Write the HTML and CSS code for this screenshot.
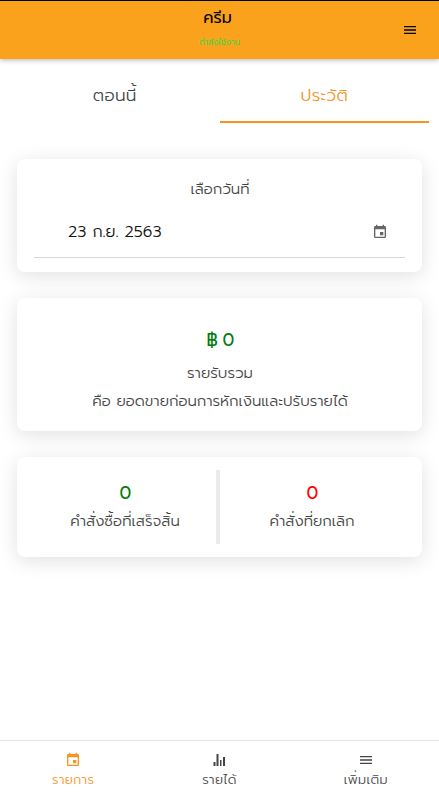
FILE: index.html
```html
<!DOCTYPE html>
<html lang="th">
<head>
    <meta charset="UTF-8">
    <meta name="viewport" content="width=device-width, initial-scale=1.0">
    <title>ครีม</title>
    <link rel="stylesheet" href="styles.css">
</head>
<body>
    <header class="header">
        <div class="header-title">
            <h1>ครีม</h1>
            <p class="status">กำลังใช้งาน</p>
        </div>
        <button class="menu-btn" aria-label="เมนู">
            <svg width="16" height="16" viewBox="0 0 24 24"><path d="M3 18h18v-2H3v2zm0-5h18v-2H3v2zm0-7v2h18V6H3z"/></svg>
        </button>
    </header>

    <div class="tabs">
        <div class="tab">ตอนนี้</div>
        <div class="tab active">ประวัติ</div>
    </div>

    <main class="content">
        <section class="card date-card">
            <div class="card-label">เลือกวันที่</div>
            <div class="date-input">
                <span class="date-value">23 ก.ย. 2563</span>
                <svg width="16" height="16" viewBox="0 0 24 24"><path d="M17 12h-5v5h5v-5zM16 1v2H8V1H6v2H5c-1.110 0-1.990.9-1.990 2L3 19c0 1.100.89 2 2 2h14c1.100 0 2-.9 2-2V5c0-1.100-.9-2-2-2h-1V1h-2zm3 18H5V8h14v11z"/></svg>
            </div>
        </section>

        <section class="card income-card">
            <div class="amount green">฿ 0</div>
            <div class="income-title">รายรับรวม</div>
            <div class="income-desc">คือ ยอดขายก่อนการหักเงินและปรับรายได้</div>
        </section>

        <section class="card order-card">
            <div class="order done">
                <div class="amount green">0</div>
                <div class="order-label">คำสั่งซื้อที่เสร็จสิ้น</div>
            </div>
            <div class="order cancelled">
                <div class="amount red">0</div>
                <div class="order-label">คำสั่งที่ยกเลิก</div>
            </div>
        </section>
    </main>

    <nav class="bottom-nav">
        <div class="nav-item active">
            <svg width="16" height="16" viewBox="0 0 24 24"><path d="M17 12h-5v5h5v-5zM16 1v2H8V1H6v2H5c-1.110 0-1.990.9-1.990 2L3 19c0 1.100.89 2 2 2h14c1.100 0 2-.9 2-2V5c0-1.100-.9-2-2-2h-1V1h-2zm3 18H5V8h14v11z"/></svg>
            <span>รายการ</span>
        </div>
        <div class="nav-item">
            <svg width="16" height="16" viewBox="0 0 16 16"><path d="M2.500 10h2v4h-2zM5.500 2h2v12h-2zM9 8h1.500v6H9zM12 5h2v9h-2z"/></svg>
            <span>รายได้</span>
        </div>
        <div class="nav-item">
            <svg width="16" height="16" viewBox="0 0 24 24"><path d="M3 18h18v-2H3v2zm0-5h18v-2H3v2zm0-7v2h18V6H3z"/></svg>
            <span>เพิ่มเติม</span>
        </div>
    </nav>
</body>
</html>
```
FILE: styles.css
```css
* {
    margin: 0;
    padding: 0;
    box-sizing: border-box;
}

body {
    font-family: 'Prompt', 'Kanit', 'Noto Sans Thai', 'Noto Sans', sans-serif;
    font-weight: 300;
    color: #444;
    background: #fff;
    min-height: 100vh;
    display: flex;
    flex-direction: column;
}

svg {
    fill: currentColor;
    display: block;
}

.header {
    height: 59px;
    background: #faa21b;
    border-top: 1px solid #000;
    box-shadow: 0 1px 5px rgba(0,0,0,0.3);
    display: grid;
    grid-template-columns: 60px 1fr 60px;
}

.header-title {
    grid-column: 2;
    text-align: center;
    padding-top: 5px;
}

h1 {
    font-size: 16px;
    line-height: 24px;
    font-weight: 400;
    color: #000;
    padding-right: 4px;
}

.status {
    font-size: 8.5px;
    line-height: 12px;
    margin-top: 7px;
    color: #00e34f;
}

.menu-btn {
    background: none;
    border: none;
    padding-left: 23px;
    color: #000;
}

.tabs {
    height: 64px;
    margin: 0 10px;
    display: flex;
}

.tab {
    flex: 1;
    text-align: center;
    font-size: 17px;
    letter-spacing: 0.3px;
    line-height: 72px;
    border-bottom: 2px solid transparent;
}

.tab.active {
    color: #f7931e;
    border-color: #f7931e;
}

.content {
    padding: 36px 17px 0;
    display: flex;
    flex-direction: column;
    gap: 26px;
    flex: 1;
}

.card {
    background: #fff;
    border-radius: 8px;
    box-shadow: 0 4px 20px rgba(0,0,0,0.12);
    text-align: center;
    font-size: 15px;
}

.date-card {
    height: 113px;
    padding: 18px 17px 0;
}

.card-label {
    line-height: 24px;
    padding-left: 1px;
}

.date-input {
    height: 57px;
    padding: 6px 17px 0 34px;
    border-bottom: 1px solid #d8d8d8;
    display: flex;
    align-items: center;
    justify-content: space-between;
    color: #666;
}

.date-value {
    font-size: 16px;
    color: #111;
}

.income-card {
    height: 133px;
    padding: 28px 0 0 1px;
}

.amount {
    font-size: 17.5px;
    line-height: 28px;
    font-weight: 400;
    letter-spacing: -0.8px;
}

.green {
    color: #007a0a;
}

.red {
    color: #f00;
}

.income-title {
    margin-top: 5px;
    line-height: 28px;
}

.income-desc {
    line-height: 28px;
}

.order-card {
    height: 100px;
    padding: 13px 17px 13px 13px;
    display: flex;
}

.order {
    flex: 1;
    padding-top: 9px;
}

.order.done {
    flex: none;
    width: 190px;
    border-right: 4px solid #e9ebed;
    padding-left: 4px;
    margin-right: -1px;
}

.order-label {
    line-height: 29px;
}

.bottom-nav {
    height: 60px;
    border-top: 1px solid #e4e4e4;
    display: flex;
}

.nav-item {
    flex: 1;
    display: flex;
    flex-direction: column;
    align-items: center;
    padding-top: 11px;
    font-size: 13px;
    letter-spacing: 0.3px;
    line-height: 24px;
}

.nav-item.active {
    color: #f7931e;
}
```
